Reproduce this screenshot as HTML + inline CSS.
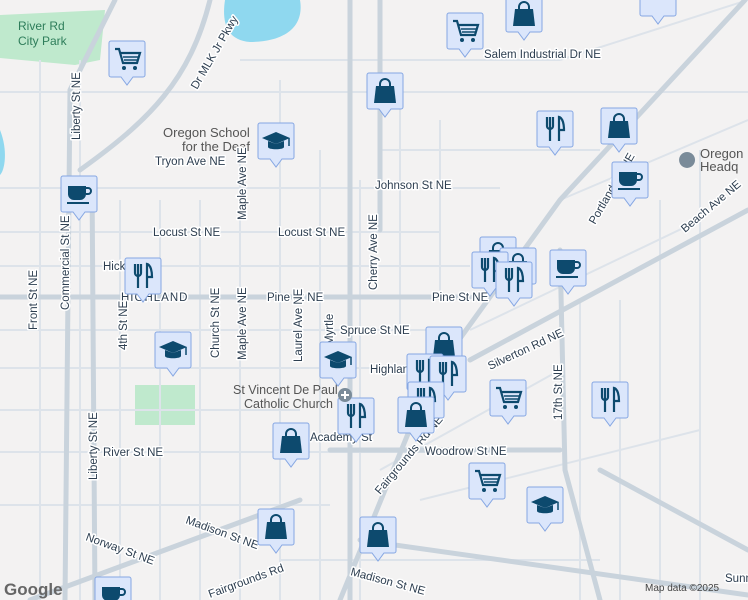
<!DOCTYPE html>
<html><head><meta charset="utf-8"><style>
html,body{margin:0;padding:0;width:748px;height:600px;overflow:hidden;background:#f3f2f2}
svg{display:block}
text{font-family:"Liberation Sans",sans-serif;font-size:11.5px;fill:#2d3e50}
.h{stroke:#fff;stroke-width:3;paint-order:stroke;stroke-linejoin:round}
</style></head><body>
<svg width="748" height="600" viewBox="0 0 748 600">
<defs>
<g id="box"><path d="M2,0h32a2,2 0 0 1 2,2v32a2,2 0 0 1 -2,2h-10l-6,8l-6,-8h-10a2,2 0 0 1 -2,-2v-32a2,2 0 0 1 2,-2z" fill="#dbe6fb" stroke="#86a7e3" stroke-width="1"/></g>
<g id="cart"><use href="#box"/><path d="M6,8h4l4,14h14l3,-10h-19" fill="none" stroke="#0d4a6e" stroke-width="2.2"/><path d="M13,12h17M14,16h15M15,19h13" stroke="#0d4a6e" stroke-width="1.4"/><circle cx="15" cy="27" r="2" fill="#0d4a6e"/><circle cx="26" cy="27" r="2" fill="#0d4a6e"/></g>
<g id="bag"><use href="#box"/><path d="M9,13h18l2,17h-22z" fill="#0d4a6e"/><path d="M13,14v-3a5,5 0 0 1 10,0v3" fill="none" stroke="#0d4a6e" stroke-width="2"/></g>
<g id="rest"><use href="#box"/><path d="M10,6v9a3,3 0 0 0 6,0v-9M13,6v24M22,30v-24c4,1 5,8 5,13h-5" fill="none" stroke="#0d4a6e" stroke-width="2.2"/></g>
<g id="cup"><use href="#box"/><path d="M7,10h18v8a6,6 0 0 1 -6,6h-6a6,6 0 0 1 -6,-6z" fill="#0d4a6e"/><path d="M25,12h2a3,3 0 0 1 0,6h-2" fill="none" stroke="#0d4a6e" stroke-width="2"/><rect x="6" y="26" width="22" height="2" fill="#0d4a6e"/></g>
<g id="grad"><use href="#box"/><path d="M4,15l14,-6l14,6l-14,6z" fill="#0d4a6e"/><path d="M10,18v6c0,3 16,3 16,0v-6l-8,3z" fill="#0d4a6e"/><path d="M31,15v8" stroke="#0d4a6e" stroke-width="1.5"/></g>
</defs>
<!-- park & water -->
<path d="M0,15 L105,10 L100,60 L75,65 L0,58z" fill="#bfe9cd"/>
<path d="M225,0 L300,0 C305,30 280,42 250,42 C225,40 222,20 225,0z" fill="#8fd8ef"/>
<path d="M0,130 C8,150 5,170 0,175z" fill="#8fd8ef"/>
<rect x="135" y="385" width="60" height="40" fill="#bfe9cd"/>
<!-- minor roads -->
<g stroke="#dde3ea" stroke-width="2" fill="none">
<path d="M0,92H748M0,188H500M0,232H440M0,266H470M0,330H440M0,368H420M0,410H300M0,452H460M240,60H560M380,150H600M0,505H330M280,560H600"/>
<path d="M40,60V600M80,60V600M120,200V600M160,200V600M200,200V600M240,150V600M280,80V600M320,150V600M360,180V600M400,100V330M440,120V300M40,100V600M580,300V600M620,300V600M660,200V600M700,150V600"/>
<path d="M470,330L700,220M380,470L560,370M420,500L700,430M560,60L748,0M560,200L748,120"/>
</g>
<!-- major roads -->
<g stroke="#c9d3dc" stroke-width="5" fill="none" stroke-linecap="round">
<path d="M210,0 C190,80 150,120 80,170"/>
<path d="M115,0 L70,90 L65,600"/>
<path d="M92,180 L95,600"/>
<path d="M0,297 H470"/>
<path d="M745,0 L560,200 L430,380 L340,600"/>
<path d="M470,360 L748,210"/>
<path d="M350,0 V600"/>
<path d="M380,0 V230"/>
<path d="M560,250 L565,470 L600,600"/>
<path d="M330,450 H560"/>
<path d="M360,540 L748,595"/>
<path d="M600,470 L748,550"/>
<path d="M30,600 L300,500"/>
</g>
<!-- labels -->
<text x="18" y="30" style="fill:#2e7d5a;font-size:12px">River Rd</text>
<text x="18" y="45" style="fill:#2e7d5a;font-size:12px">City Park</text>
<text x="163" y="137" style="fill:#555;font-size:13px">Oregon School</text>
<text x="182" y="151" style="fill:#555;font-size:13px">for the Deaf</text>
<text x="700" y="158" style="fill:#555;font-size:13px">Oregon</text>
<text x="700" y="171" style="fill:#555;font-size:13px">Headq</text>
<text x="233" y="394" style="fill:#555;font-size:12.5px">St Vincent De Paul</text>
<text x="244" y="408" style="fill:#555;font-size:12.5px">Catholic Church</text>
<text x="155" y="165" class="h">Tryon Ave NE</text>
<text x="153" y="236" class="h">Locust St NE</text>
<text x="278" y="236" class="h">Locust St NE</text>
<text x="267" y="301" class="h">Pine St NE</text>
<text x="432" y="301" class="h">Pine St NE</text>
<text x="121" y="301" class="h" style="letter-spacing:1px">HIGHLAND</text>
<text x="103" y="270" class="h">Hick</text>
<text x="340" y="334" class="h">Spruce St NE</text>
<text x="370" y="373" class="h">Highlan</text>
<text x="375" y="189" class="h">Johnson St NE</text>
<text x="103" y="456" class="h">River St NE</text>
<text x="310" y="441" class="h">Academy St</text>
<text x="425" y="455" class="h">Woodrow St NE</text>
<text x="480" y="19" class="h" transform="rotate(0)"></text>
<text x="484" y="58" class="h">Salem Industrial Dr NE</text>
<text x="725" y="582" class="h">Sunnyview Rd</text>
<text x="645" y="591" style="font-size:10px;fill:#444">Map data ©2025</text>
<text x="4" y="595" style="font-size:17px;fill:#666;font-weight:bold">Google</text>
<g class="h">
<text transform="translate(69,310) rotate(-90)" class="h">Commercial St NE</text>
<text transform="translate(37,330) rotate(-90)" class="h">Front St NE</text>
<text transform="translate(97,480) rotate(-90)" class="h">Liberty St NE</text>
<text transform="translate(80,140) rotate(-90)" class="h">Liberty St NE</text>
<text transform="translate(127,350) rotate(-90)" class="h">4th St NE</text>
<text transform="translate(219,358) rotate(-90)" class="h">Church St NE</text>
<text transform="translate(246,360) rotate(-90)" class="h">Maple Ave NE</text>
<text transform="translate(246,220) rotate(-90)" class="h">Maple Ave NE</text>
<text transform="translate(302,362) rotate(-90)" class="h">Laurel Ave NE</text>
<text transform="translate(333,345) rotate(-90)" class="h">Myrtle</text>
<text transform="translate(377,290) rotate(-90)" class="h">Cherry Ave NE</text>
<text transform="translate(562,420) rotate(-90)" class="h">17th St NE</text>
<text transform="translate(197,90) rotate(-60)" class="h">Dr MLK Jr Pkwy</text>
<text transform="translate(380,495) rotate(-50)" class="h">Fairgrounds Rd NE</text>
<text transform="translate(490,370) rotate(-25)" class="h">Silverton Rd NE</text>
<text transform="translate(595,225) rotate(-60)" class="h">Portland Rd NE</text>
<text transform="translate(185,523) rotate(20)" class="h">Madison St NE</text>
<text transform="translate(85,540) rotate(20)" class="h">Norway St NE</text>
<text transform="translate(350,575) rotate(15)" class="h">Madison St NE</text>
<text transform="translate(210,598) rotate(-20)" class="h">Fairgrounds Rd</text>
<text transform="translate(685,233) rotate(-40)" class="h">Beach Ave NE</text>
</g>
<!-- markers -->
<use href="#cart" x="109" y="41"/>
<use href="#cart" x="447" y="13"/>
<use href="#bag" x="506" y="-4"/>
<use href="#bag" x="367" y="73"/>
<use href="#grad" x="258" y="123"/>
<use href="#rest" x="537" y="111"/>
<use href="#bag" x="601" y="108"/>
<use href="#cup" x="61" y="176"/>
<use href="#cup" x="612" y="162"/>
<use href="#cup" x="550" y="250"/>
<use href="#bag" x="480" y="237"/>
<use href="#bag" x="500" y="248"/>
<use href="#rest" x="472" y="252"/>
<use href="#rest" x="496" y="262"/>
<use href="#rest" x="125" y="258"/>
<use href="#grad" x="155" y="332"/>
<use href="#bag" x="426" y="327"/>
<use href="#grad" x="320" y="342"/>
<use href="#rest" x="407" y="354"/>
<use href="#rest" x="430" y="356"/>
<use href="#rest" x="408" y="382"/>
<use href="#rest" x="338" y="398"/>
<circle cx="345" cy="395" r="7" fill="#7a8b99"/><path d="M345,391v8M341,395h8" stroke="#fff" stroke-width="2"/>
<use href="#bag" x="398" y="397"/>
<use href="#cart" x="490" y="380"/>
<use href="#rest" x="592" y="382"/>
<use href="#bag" x="273" y="423"/>
<use href="#cart" x="469" y="463"/>
<use href="#grad" x="527" y="487"/>
<use href="#bag" x="258" y="509"/>
<use href="#bag" x="360" y="517"/>
<use href="#cup" x="95" y="577"/>
<use href="#box" x="640" y="-20"/>
<path d="M687,152a8,8 0 1 0 0.1,0z" fill="#7a8b99"/>
</svg>
</body></html>
